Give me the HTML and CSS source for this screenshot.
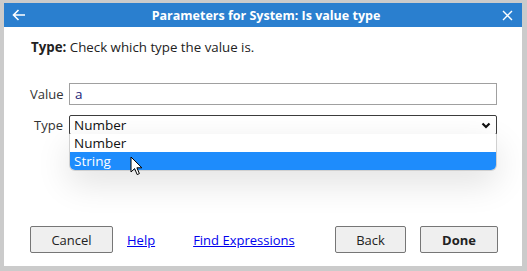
FILE: index.html
```html
<!DOCTYPE html>
<html lang="en">
  <head>
    <meta charset="UTF-8" />
    <title>Parameters for System: Is value type</title>
    <link rel="stylesheet" href="styles.css">
  </head>
  <body>
    <div class="dialog">
      <div class="titlebar">
        <span class="bar-icon">
          <svg width="14" height="12" viewBox="0 0 14 12">
            <path d="M13 6H1.5M6.5 1L1.5 6l5 5" fill="none" stroke="#fff" stroke-width="1.6" />
          </svg>
        </span>
        <span class="title">Parameters for System: Is value type</span>
        <span class="bar-icon">
          <svg width="11" height="11" viewBox="0 0 11 11">
            <path d="M1 1l9 9M10 1l-9 9" fill="none" stroke="#fff" stroke-width="1.4" />
          </svg>
        </span>
      </div>

      <div class="content">
        <p class="desc"><b>Type:</b> Check which type the value is.</p>

        <div class="form">
          <label for="value">Value</label>
          <input id="value" class="field" type="text" value="a" />

          <label for="type">Type</label>
          <div class="select-wrap">
            <select id="type" class="field select">
              <option>Number</option>
              <option>String</option>
            </select>
            <svg class="chevron" width="10" height="7" viewBox="0 0 10 7">
              <path d="M1.5 1.5L5 5l3.5-3.5" fill="none" stroke="#111" stroke-width="2.2" />
            </svg>
            <ul class="dropdown">
              <li>Number</li>
              <li class="active">String</li>
            </ul>
            <svg class="cursor" width="13" height="20" viewBox="0 0 13 20">
              <path d="M1 1v15l3.6-3.4 2.6 6 2.2-1-2.5-5.8h5z" fill="#fff" stroke="#000" stroke-width="1" stroke-linejoin="round" />
            </svg>
          </div>
        </div>
      </div>

      <div class="actions">
        <button class="btn btn-cancel">Cancel</button>
        <a href="#" class="link">Help</a>
        <a href="#" class="link link-find">Find Expressions</a>
        <button class="btn btn-back">Back</button>
        <button class="btn btn-done">Done</button>
      </div>
    </div>
  </body>
</html>
```

FILE: styles.css
```css
body {
  margin: 0;
  padding: 3px 5px 5px 4px;
  background-color: #cbcbcb;
  font-family: "Open Sans", "Noto Sans", sans-serif;
  font-size: 13px;
  color: #222;
}

.dialog {
  background-color: #fff;
  height: 263px;
  display: flex;
  flex-direction: column;
}

.titlebar {
  height: 24px;
  background-color: #2a7fcf;
  display: flex;
  align-items: center;
  color: #fff;
}

.bar-icon {
  width: 30px;
  display: flex;
  justify-content: center;
}

.title {
  flex: 1;
  text-align: center;
  font-weight: 700;
  font-size: 12.5px;
  padding-left: 6px;
}

.content {
  padding: 0 25px 0 26px;
  flex: 1;
}

.desc {
  margin: 11px 0 0 1px;
  font-size: 13.3px;
}

.form {
  display: grid;
  grid-template-columns: 33px 1fr;
  column-gap: 6px;
  row-gap: 10px;
  align-items: center;
  margin-top: 27px;
}

.form label {
  text-align: right;
  color: #333;
}

.field {
  font-family: "Open Sans", "Noto Sans", sans-serif;
  font-size: 13.5px;
  box-sizing: border-box;
  width: 100%;
  margin: 0;
}

input.field {
  height: 22px;
  border: 1px solid #a0a0a0;
  padding: 0 5px;
  color: #1c1c78;
}

.select-wrap {
  position: relative;
}

.select {
  -webkit-appearance: none;
  appearance: none;
  height: 20px;
  border: 1px solid #3c3c3c;
  border-radius: 2px;
  padding: 0 4px;
  background-color: #fff;
  color: #111;
  outline: none;
}

.chevron {
  position: absolute;
  right: 6px;
  top: 7px;
}

.dropdown {
  position: absolute;
  top: 19px;
  left: 0;
  right: 0;
  margin: 0;
  padding: 0;
  list-style: none;
  background-color: #fff;
  border: 1px solid #d0d0d0;
  border-top: none;
  border-radius: 0 0 6px 6px;
  overflow: hidden;
  box-shadow: 0 12px 34px rgba(0, 0, 0, 0.12);
  color: #111;
  font-size: 13.5px;
}

.dropdown li {
  height: 18px;
  line-height: 18px;
  padding-left: 4px;
}

.dropdown li.active {
  background-color: #1e8cfc;
  color: #fff;
}

.cursor {
  position: absolute;
  left: 61px;
  top: 41px;
}

.actions {
  display: flex;
  align-items: center;
  padding: 0 24px 13px 26px;
}

.btn {
  font-family: "Open Sans", "Noto Sans", sans-serif;
  font-size: 13px;
  height: 27px;
  background-color: #efefef;
  border: 1px solid #767676;
  border-radius: 2px;
  color: #222;
  padding: 0;
}

.btn-cancel {
  width: 83px;
}

.btn-back {
  width: 71px;
  margin-left: auto;
}

.btn-done {
  width: 78px;
  margin-left: 14px;
  font-weight: 700;
}

.link {
  color: #0000ee;
  margin-left: 14px;
}

.link-find {
  margin-left: 38px;
}
```
